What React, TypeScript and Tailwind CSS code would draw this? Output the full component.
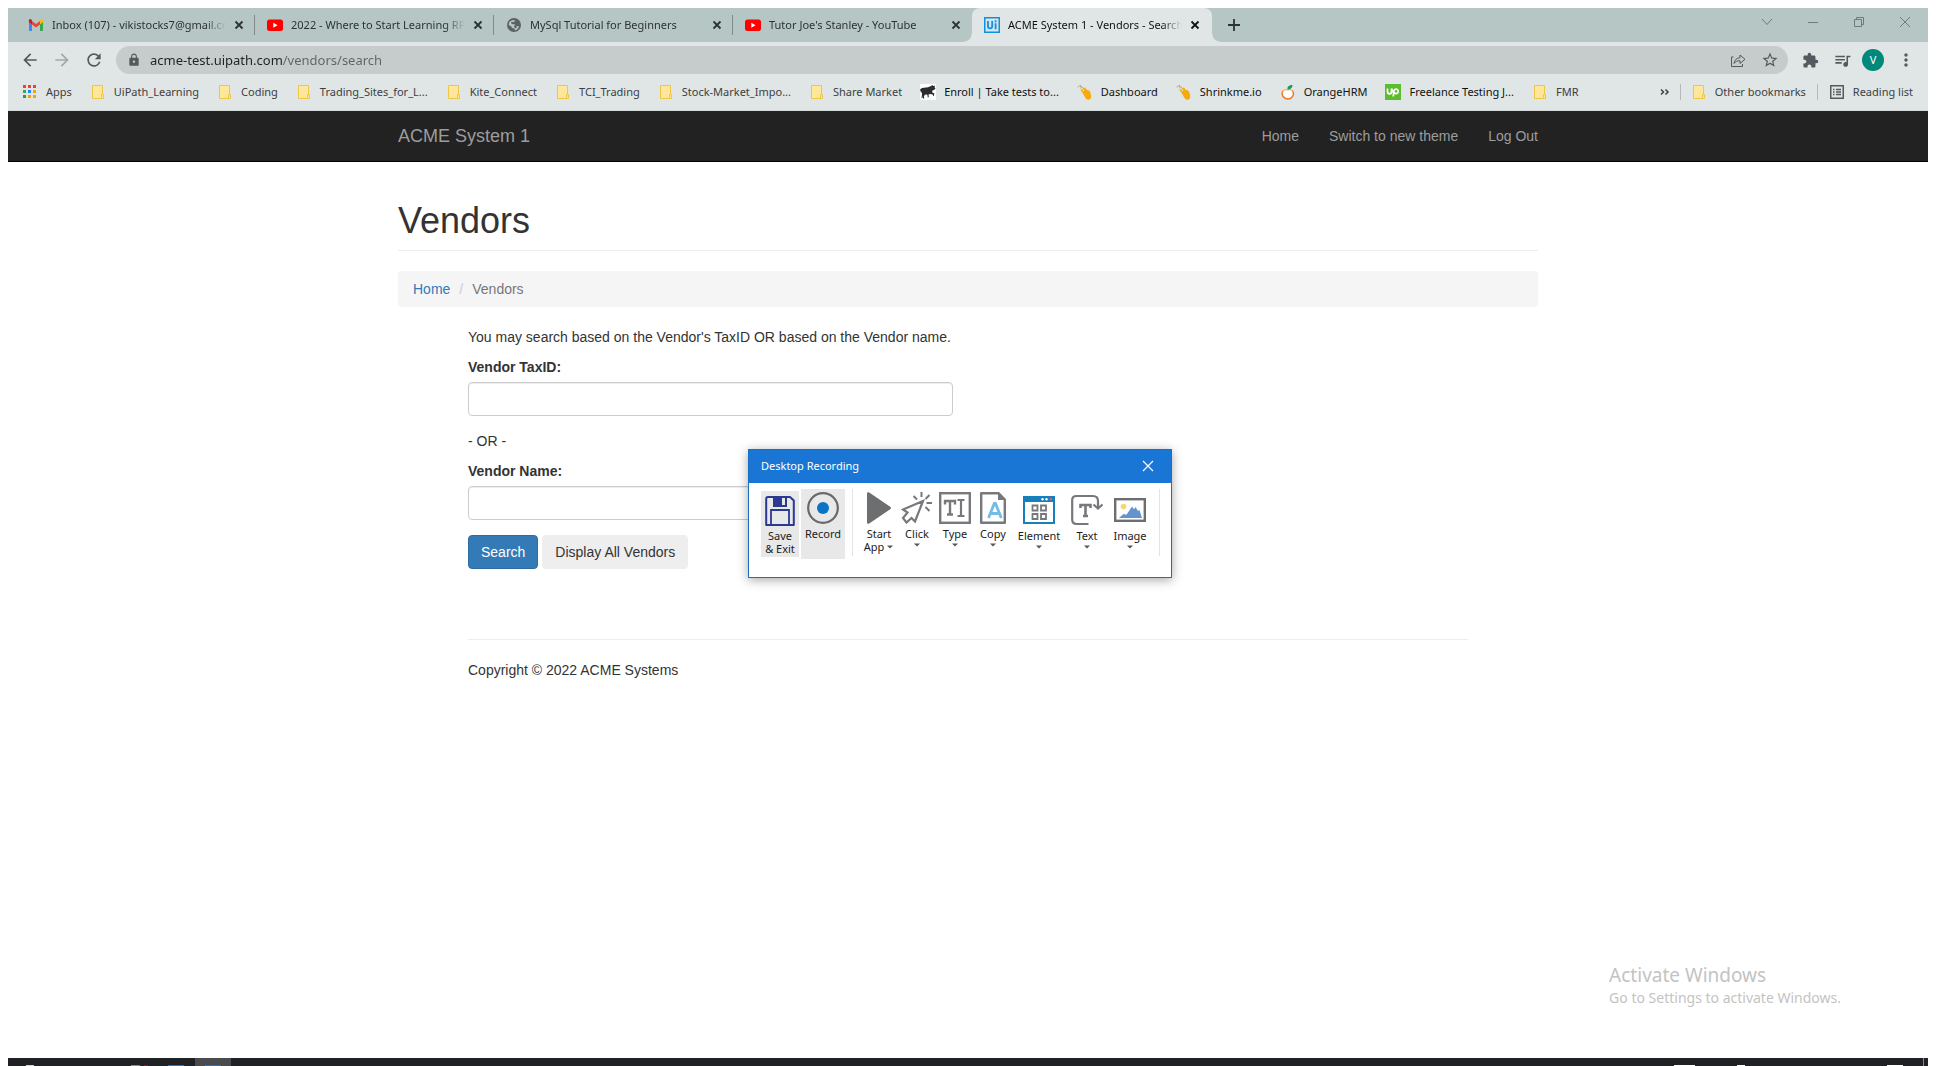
import React from 'react';
import {
  MdArrowBack,
  MdArrowForward,
  MdRefresh,
  MdLock,
  MdStarBorder,
  MdExtension,
  MdQueueMusic,
  MdMoreVert,
} from 'react-icons/md';

/* ---------- favicons and bookmark icons ---------- */

const GmailIcon = () => (
  <svg viewBox="0 0 16 16" className="size-4 shrink-0">
    <path d="M1 5v8.2c0 .4.4.8.8.8H4V7L1 4.6z" fill="#4285f4" />
    <path d="M15 5v8.2c0 .4-.4.8-.8.8H12V7l3-2.4z" fill="#34a853" />
    <path d="M12 4v3.5L15.2 5V3.8c0-1.4-1.5-2.2-2.6-1.4z" fill="#fbbc04" />
    <path d="M4 7.5V4l4 3 4-3v3.5l-4 3z" fill="#ea4335" />
    <path d="M.8 3.8V5L4 7.5V4l-.6-1.6C2.3 1.6.8 2.4.8 3.8z" fill="#c5221f" />
  </svg>
);

const YouTubeIcon = () => (
  <svg viewBox="0 0 16 16" className="size-4 shrink-0">
    <rect x="0" y="2.5" width="16" height="11.5" rx="2.5" fill="#ff0000" />
    <path d="M6.3 5.8v4.9l4.3-2.45z" fill="#fff" />
  </svg>
);

const GlobeIcon = () => (
  <svg viewBox="0 0 16 16" className="size-4 shrink-0">
    <circle cx="8" cy="8" r="7" fill="#5b6165" />
    <path d="M3.2 5.2C5 3 7.500 2.800 9.200 3.600L8 5.200 6 6l2.500 1.200 1 1.800 3.500.200c-.300 1.900-1.800 3.700-4 4.200l-.500-2-2.500-.500-1-2-2.300-.700z" fill="#b6c6c5" />
    <path d="M5.500 4.800l2.500.700.800 1.500-2.300.300-1.500-1z M7.500 8.500l3 .500.300 1.800-1.800.400z" fill="#5b6165" />
  </svg>
);

const UiPathIcon = () => (
  <svg viewBox="0 0 16 16" className="size-4 shrink-0">
    <rect x="0" y="0" width="16" height="16" fill="#1290dc" />
    <rect x="1.5" y="1.5" width="13" height="13" fill="#d4e6f0" />
    <path d="M4 4v5.300a2.100 2.100 0 0 0 4.200 0V4" stroke="#1290dc" strokeWidth="1.800" fill="none" />
    <path d="M11.600 6.300v6M11.600 3.300v1.900" stroke="#1290dc" strokeWidth="1.800" />
  </svg>
);

const appColors = [
  'fill-[#ea4335]', 'fill-[#ea4335]', 'fill-[#ea4335]',
  'fill-[#34a853]', 'fill-[#1a88ff]', 'fill-[#f5a300]',
  'fill-[#2c9a55]', 'fill-[#f5a300]', 'fill-[#f5a300]',
];

const AppsIcon = () => (
  <svg viewBox="0 0 16 16" className="size-4 shrink-0">
    {appColors.map((c, i) => (
      <rect key={i} x={1 + (i % 3) * 5} y={1 + Math.floor(i / 3) * 5} width="3" height="3" className={c} />
    ))}
  </svg>
);

const FolderIcon = () => (
  <svg viewBox="0 0 16 16" className="size-4 shrink-0">
    <path d="M2.5 1.5h10v13h-10z" fill="#ffe69a" stroke="#edc64a" />
    <path d="M11.5 10.5h2v4h-2z" fill="#ffe69a" stroke="#edc64a" />
  </svg>
);

const BullIcon = () => (
  <svg viewBox="0 0 16 16" className="size-4 shrink-0">
    <rect width="16" height="16" fill="#fff" />
    <path
      d="M0 5.500l2-1.500 6-.800 3-1.200 1.500-1 .500 1 2.200-.500-.700 1.500 1 1.500-1.500 1.500-1.300.300-.700 2 2.300 1.200-.300 2.500-.900-.200-.300-1.300-2.800-.500-1.500.500.300 2.500-1 .500-.500-3-2.500.200-.800 1.500.200 2.300H3l-.200-3L2.500 14h-1l.500-3.500-.300-2.500-.700.500z"
      fill="#2b2d2f"
    />
  </svg>
);

const TagIcon = () => (
  <svg viewBox="0 0 16 16" className="size-4 shrink-0">
    <path d="M1 3.500a1.500 1.500 0 1 1 2.500 1M3 1l3 3" stroke="#b9a878" fill="none" />
    <path d="M3.500 6L8 3.300l1.300 2.200 3.500 1.500 1.400 4.500-.200 3-2.500 1.500-2.300-1L7 11.500 5.500 8.800z" fill="#f5ab0c" />
    <circle cx="6.400" cy="6.200" r=".7" fill="#fff" />
  </svg>
);

const OrangeIcon = () => (
  <svg viewBox="0 0 16 16" className="size-4 shrink-0">
    <path d="M3.300 6.500C1.500 9 2 12 4.300 13.700c2 1.500 5.200 1.500 7.200 0 2.300-1.800 2.600-5 .700-7.200" stroke="#ee7623" strokeWidth="1.500" fill="#fff" />
    <path d="M2.500 8C4 5.500 6 5.300 7.800 6c1.800-.700 4-.300 5.200 1.800" stroke="#f09a5c" fill="#fff" />
    <path d="M7.500 5.500C7 2.700 9 1 12.500 1c0 2.500-1.500 4.300-4 4.500z" fill="#1f9a55" />
  </svg>
);

const UpworkIcon = () => (
  <svg viewBox="0 0 16 16" className="size-4 shrink-0">
    <rect width="16" height="16" fill="#5bbc2e" />
    <path
      d="M2.500 4.500v3.300a2 2 0 0 0 4 0V4.500C7.200 7 8.200 8.600 10.200 9.400a2.200 2.200 0 1 0-1.300-2.700L8.200 12.500"
      stroke="#fff"
      strokeWidth="1.700"
      fill="none"
    />
  </svg>
);

const ReadingListIcon = () => (
  <svg viewBox="0 0 16 16" className="size-4 shrink-0" fill="none" stroke="#55595d">
    <rect x="1.750" y="1.750" width="12.500" height="12.500" strokeWidth="1.500" />
    <path d="M4 5.500h1.500M4 8h1.500M4 10.500h1.500M7 5.500h5M7 8h5M7 10.500h5" strokeWidth="1.400" />
  </svg>
);

/* ---------- recorder icons ---------- */

const SaveIcon = () => (
  <svg viewBox="0 0 32 32" className="size-8">
    <path d="M4 3h22l3.800 3.500V31H2.200V5q0-2 1.800-2z" fill="none" stroke="#2b3990" strokeWidth="2" strokeLinejoin="round" />
    <path d="M9 2h14v11H9z" fill="#2b3990" />
    <path d="M18 4h3v7h-3z" fill="#e8e8e8" />
    <path d="M7 31V16h18v15" fill="none" stroke="#2b3990" strokeWidth="1.800" />
  </svg>
);

const RecordIcon = () => (
  <svg viewBox="0 0 32 32" className="size-8">
    <circle cx="16" cy="16" r="14.800" fill="none" stroke="#68696b" strokeWidth="2.200" />
    <circle cx="16" cy="16" r="6" fill="#0a74c4" />
  </svg>
);

const PlayIcon = () => (
  <svg viewBox="0 0 32 32" className="size-8">
    <path d="M4 1.500C4 .2 5.200-.2 6.200.6l21 14.200c1 .7 1 1.700 0 2.400l-21 14.200c-1 .8-2.200.400-2.200-.900z" fill="#6d6e70" />
  </svg>
);

const ClickIcon = () => (
  <svg viewBox="0 0 32 32" className="size-8">
    <path
      d="M22 9L2 17.500l4.500 3L2 26l3.500 4.500 5-4.500 3.500 3.500z"
      fill="none"
      stroke="#77787b"
      strokeWidth="2.200"
      strokeLinejoin="miter"
    />
    <path d="M12.500 4l3.500 3.500M20.500 0v5M28.500 3l-4 4M31 11h-5.500M24.500 15l4 4" stroke="#77787b" strokeWidth="2" fill="none" />
  </svg>
);

const TypeIcon = () => (
  <svg viewBox="0 0 32 32" className="size-8" fill="none" stroke="#77787b">
    <rect x="1.200" y="1.200" width="29.600" height="29.600" strokeWidth="2.400" />
    <path d="M6 12.500V9h10v3.500M11 9v13.500M8 22.500h6" strokeWidth="2.400" />
    <path d="M18.500 8h7M22 8v16M18.500 24h7" strokeWidth="2.200" />
  </svg>
);

const CopyIcon = () => (
  <svg viewBox="0 0 32 32" className="size-8" fill="none">
    <path d="M4.200 1.200H21.500L27.800 7.500V30.800H4.200z" stroke="#77787b" strokeWidth="2.400" strokeLinejoin="round" />
    <path d="M21 1l7 7h-7z" fill="#77787b" />
    <path d="M11.500 26l5.800-14.500h1.200L24.300 26M13.800 21.500h8.400" stroke="#76bbe4" strokeWidth="2.800" />
  </svg>
);

const ElementIcon = () => (
  <svg viewBox="0 0 32 32" className="size-8" fill="none">
    <rect x="1" y="3" width="30" height="26" stroke="#1680bd" strokeWidth="2" />
    <path d="M0 2h32v6H0z" fill="#1680bd" />
    <circle cx="19.500" cy="5.300" r="1.200" fill="#fff" />
    <circle cx="23.500" cy="5.300" r="1.200" fill="#fff" />
    <circle cx="27.800" cy="5.300" r="1.400" fill="#f0506a" />
    <path d="M9.500 11.500h5v5h-5zM18 11.500h5v5h-5zM9.500 20h5v5h-5zM18 20h5v5h-5z" stroke="#77787b" strokeWidth="1.800" />
  </svg>
);

const TextIcon = () => (
  <svg viewBox="0 0 32 32" className="size-8" fill="none" stroke="#77787b" strokeWidth="2.200">
    <path d="M17.500 30H5.500Q1.200 30 1.200 25.500V6Q1.200 2 5.500 2H22Q27 2 27 7V13.500" />
    <path d="M22.500 10.500l4.500 4 4.500-4" />
    <path d="M9.500 14v-3h10v3M14.500 11v11M12 22h5" strokeWidth="2.600" />
  </svg>
);

const ImageIcon = () => (
  <svg viewBox="0 0 32 32" className="size-8">
    <rect x="1.200" y="5.200" width="29.600" height="21.600" fill="#fff" stroke="#6d6e70" strokeWidth="2.400" />
    <circle cx="9.500" cy="12.500" r="2.800" fill="#f0d878" />
    <path d="M5 24l4.500-4 3 .8L18 12.500l2 2.700 1.500-2.200 2.500 4 1.500-1 2.500 8z" fill="#6494cf" />
  </svg>
);

const Caret = () => (
  <svg viewBox="0 0 8 4" className="h-1 w-2">
    <path d="M1 .5h6L4 3.500z" fill="#55565a" />
  </svg>
);

const CloseGlyph = () => (
  <svg viewBox="0 0 10 10" className="size-2.5" stroke="currentColor" strokeWidth="1.800">
    <path d="M1.500 1.500l7 7M8.500 1.500l-7 7" />
  </svg>
);

/* ---------- browser chrome ---------- */

const tabs = [
  { title: 'Inbox (107) - vikistocks7@gmail.com', icon: <GmailIcon /> },
  { title: '2022 - Where to Start Learning RPA', icon: <YouTubeIcon /> },
  { title: 'MySql Tutorial for Beginners', icon: <GlobeIcon /> },
  { title: "Tutor Joe's Stanley - YouTube", icon: <YouTubeIcon /> },
  { title: 'ACME System 1 - Vendors - Search', icon: <UiPathIcon />, active: true },
];

function TabStrip() {
  return (
    <div className="flex h-[34px] bg-[#b6c6c5] pl-2 text-[11px] text-[#2c3334]">
      <div className="flex">
        {tabs.map((t, i) => (
          <div
            key={t.title}
            className={
              t.active
                ? 'relative flex w-60 items-center rounded-t-lg bg-[#e0e6e5] pr-1 pl-3 text-[#111] before:absolute before:bottom-0 before:-left-2 before:size-2 before:bg-[radial-gradient(circle_at_0_0,transparent_7px,#e0e6e5_8px)] after:absolute after:-right-2 after:bottom-0 after:size-2 after:bg-[radial-gradient(circle_at_100%_0,transparent_7px,#e0e6e5_8px)]'
                : 'flex w-[239px] items-center pl-3'
            }
          >
            <button type="button" className="flex min-w-0 flex-1 items-center gap-2 text-left">
              {t.icon}
              <span className="flex-1 overflow-hidden leading-4 whitespace-nowrap [mask-image:linear-gradient(to_right,black_calc(100%-20px),transparent)]">
                {t.title}
              </span>
            </button>
            <button type="button" aria-label="Close tab" className="flex size-[26px] shrink-0 items-center justify-center">
              <CloseGlyph />
            </button>
            {!t.active && <span className={i < 3 ? 'ml-0.5 h-5 w-px bg-[#7f8a89]' : 'ml-0.5 w-px'} />}
          </div>
        ))}
      </div>
      <button type="button" aria-label="New tab" className="flex w-11 items-center justify-center text-[#2c3334]">
        <svg viewBox="0 0 12 12" className="size-3" stroke="currentColor" strokeWidth="1.800">
          <path d="M6 0v12M0 6h12" />
        </svg>
      </button>
      <div className="ml-auto flex h-7 text-[#6f7a7a]">
        <button type="button" aria-label="Search tabs" className="flex w-[46px] items-center justify-center">
          <svg viewBox="0 0 12 12" className="size-3" fill="none" stroke="currentColor">
            <path d="M1 3l5 5.500L11 3" />
          </svg>
        </button>
        <button type="button" aria-label="Minimize" className="flex w-[46px] items-center justify-center">
          <svg viewBox="0 0 10 10" className="size-2.5" stroke="currentColor">
            <path d="M0 5.500h10" />
          </svg>
        </button>
        <button type="button" aria-label="Restore" className="flex w-[46px] items-center justify-center">
          <svg viewBox="0 0 10 10" className="size-2.5" fill="none" stroke="currentColor">
            <path d="M.5 2.500h7v7h-7zM2.500 2.500v-2h7v7h-2" />
          </svg>
        </button>
        <button type="button" aria-label="Close window" className="flex w-[46px] items-center justify-center">
          <svg viewBox="0 0 10 10" className="size-2.5" stroke="currentColor">
            <path d="M0 0l10 10M10 0L0 10" />
          </svg>
        </button>
      </div>
    </div>
  );
}

function AddressBar() {
  return (
    <div className="flex h-9 items-center pr-1 pl-3 text-[#55595d]">
      <button type="button" aria-label="Back" className="flex w-8 justify-start">
        <MdArrowBack className="size-5" />
      </button>
      <button type="button" aria-label="Forward" className="flex w-8 justify-start text-[#a3a9ab]">
        <MdArrowForward className="size-5" />
      </button>
      <button type="button" aria-label="Reload" className="flex w-8 justify-start">
        <MdRefresh className="size-5" />
      </button>
      <div className="flex h-7 flex-1 items-center rounded-full bg-[#c6cbcb] pr-0.5 pl-[11px]">
        <MdLock className="size-3.5 shrink-0" />
        <input
          aria-label="Address"
          defaultValue="acme-test.uipath.com/vendors/search"
          className="ml-[9px] h-5 flex-1 bg-[linear-gradient(to_right,#202124_133px,#5f6368_133px)] bg-clip-text text-[13px] text-[#202124] outline-none [-webkit-text-fill-color:transparent]"
        />
        <button type="button" aria-label="Share" className="flex w-8 justify-center">
          <svg viewBox="0 0 16 16" className="size-4" fill="none" stroke="currentColor">
            <path d="M3.500 5H1.500v9.500h11V12" />
            <path d="M4 11.500C4.500 8 6.500 6 10 5.700V3l5 4.300-5 4.200V8.700C7.500 8.700 5.500 9.500 4 11.500z" strokeLinejoin="round" />
          </svg>
        </button>
        <button type="button" aria-label="Bookmark this page" className="flex w-8 justify-center">
          <MdStarBorder className="size-[18px]" />
        </button>
      </div>
      <div className="flex items-center pl-1.5">
        <button type="button" aria-label="Extensions" className="flex w-8 justify-center">
          <MdExtension className="size-[17px]" />
        </button>
        <button type="button" aria-label="Media controls" className="flex w-8 justify-center">
          <MdQueueMusic className="size-[19px]" />
        </button>
        <button type="button" aria-label="Profile" className="mx-1 flex size-[22px] items-center justify-center rounded-full bg-[#00897b] text-[11px] text-white">
          V
        </button>
        <button type="button" aria-label="Menu" className="flex w-9 justify-center">
          <MdMoreVert className="size-5" />
        </button>
      </div>
    </div>
  );
}

const bookmarks = [
  { label: 'UiPath_Learning', icon: <FolderIcon /> },
  { label: 'Coding', icon: <FolderIcon /> },
  { label: 'Trading_Sites_for_L...', icon: <FolderIcon /> },
  { label: 'Kite_Connect', icon: <FolderIcon /> },
  { label: 'TCI_Trading', icon: <FolderIcon /> },
  { label: 'Stock-Market_Impo...', icon: <FolderIcon /> },
  { label: 'Share Market', icon: <FolderIcon /> },
  { label: 'Enroll | Take tests to...', icon: <BullIcon />, site: true },
  { label: 'Dashboard', icon: <TagIcon />, site: true },
  { label: 'Shrinkme.io', icon: <TagIcon />, site: true },
  { label: 'OrangeHRM', icon: <OrangeIcon />, site: true },
  { label: 'Freelance Testing J...', icon: <UpworkIcon />, site: true },
  { label: 'FMR', icon: <FolderIcon /> },
];

function BookmarksBar() {
  return (
    <div className="flex h-[33px] items-center border-b border-[#d3d9d8] pr-[15px] pb-1 pl-3.5 text-[11px] leading-4 whitespace-nowrap text-[#3c4043]">
      <div className="flex gap-[18px]">
        <button type="button" className="flex items-center gap-2">
          <AppsIcon />
          Apps
        </button>
        {bookmarks.map((b) =>
          b.site ? (
            <a key={b.label} href="#" className="flex items-center gap-2 text-[#111]">
              {b.icon}
              {b.label}
            </a>
          ) : (
            <button key={b.label} type="button" className="flex items-center gap-2">
              {b.icon}
              {b.label}
            </button>
          ),
        )}
      </div>
      <div className="ml-auto flex items-center">
        <button type="button" aria-label="More bookmarks" className="mr-2.5">
          <svg viewBox="0 0 10 10" className="size-2.5" fill="none" stroke="#3c4043" strokeWidth="1.500">
            <path d="M1 2.500L3.500 5 1 7.500M5.500 2.500L8 5 5.500 7.500" />
          </svg>
        </button>
        <span className="h-4 w-px bg-[#b4baba]" />
        <button type="button" className="ml-2.5 flex items-center gap-2">
          <FolderIcon />
          Other bookmarks
        </button>
        <span className="ml-[11px] h-4 w-px bg-[#b4baba]" />
        <button type="button" className="ml-[11px] flex items-center gap-2">
          <ReadingListIcon />
          Reading list
        </button>
      </div>
    </div>
  );
}

/* ---------- page ---------- */

function SiteNav() {
  return (
    <nav className="border-b border-black bg-[#222] text-sm leading-5 text-[#9d9d9d]">
      <div className="mx-auto flex h-[50px] max-w-[1170px] items-center justify-between px-[15px]">
        <a href="#" className="text-lg leading-5">ACME System 1</a>
        <div className="flex gap-[30px]">
          <a href="#">Home</a>
          <a href="#">Switch to new theme</a>
          <a href="#">Log Out</a>
        </div>
      </div>
    </nav>
  );
}

function VendorSearch() {
  const field =
    'block h-[34px] w-full max-w-[485px] rounded border border-[#ccc] bg-white px-3 shadow-[inset_0_1px_1px_rgba(0,0,0,0.075)] outline-none';
  return (
    <main className="mx-auto w-full max-w-[1170px] px-[15px] text-sm leading-5 text-[#333]">
      <h1 className="mt-[39px] border-b border-[#eee] pb-2.5 text-4xl leading-[39px]">Vendors</h1>
      <nav aria-label="Breadcrumb" className="mt-5 flex gap-[9px] rounded bg-[#f5f5f5] px-[15px] py-2">
        <a href="#" className="text-[#337ab7]">Home</a>
        <span className="text-[#ccc]">/</span>
        <span className="text-[#777]">Vendors</span>
      </nav>
      <div className="mt-5 px-[70px]">
        <form onSubmit={(e) => e.preventDefault()}>
          <p>You may search based on the Vendor's TaxID OR based on the Vendor name.</p>
          <label htmlFor="tax-id" className="mt-2.5 mb-[5px] block font-bold">Vendor TaxID:</label>
          <input id="tax-id" type="text" className={field} />
          <p className="mt-[15px]">- OR -</p>
          <label htmlFor="vendor-name" className="mt-2.5 mb-[5px] block font-bold">Vendor Name:</label>
          <input id="vendor-name" type="text" className={field} />
          <div className="mt-[15px] flex gap-1">
            <button type="submit" className="rounded border border-[#2e6da4] bg-[#337ab7] px-3 py-1.5 text-white">
              Search
            </button>
            <button type="button" className="rounded border border-[#eee] bg-[#eee] px-3 py-1.5">
              Display All Vendors
            </button>
          </div>
        </form>
        <footer className="mt-[70px] border-t border-[#eee] pt-5">
          <p>Copyright © 2022 ACME Systems</p>
        </footer>
      </div>
    </main>
  );
}

/* ---------- recorder window ---------- */

const tools = [
  { label: 'Click', icon: <ClickIcon />, box: 'w-[38px] pt-[9px]' },
  { label: 'Type', icon: <TypeIcon />, box: 'w-[38px] pt-[9px]' },
  { label: 'Copy', icon: <CopyIcon />, box: 'w-[38px] pt-[9px]' },
  { label: 'Element', icon: <ElementIcon />, box: 'w-[54px] pt-[11px]' },
  { label: 'Text', icon: <TextIcon />, box: 'w-[42px] pt-[11px]' },
  { label: 'Image', icon: <ImageIcon />, box: 'w-[44px] pt-[11px]' },
];

function RecorderWindow() {
  return (
    <section
      aria-label="Desktop Recording"
      className="absolute top-[449px] left-[748px] w-[424px] border border-[#1a6fc4] bg-white text-[11px] leading-[13px] text-[#1c1c1c] shadow-[0_2px_10px_rgba(0,0,0,0.35)]"
    >
      <header className="flex h-[33px] items-center justify-between bg-[#1976d4] pr-[17px] pb-0.5 pl-3 text-white">
        <span>Desktop Recording</span>
        <button type="button" aria-label="Close recorder">
          <svg viewBox="0 0 12 12" className="size-3" stroke="currentColor" strokeWidth="1.200">
            <path d="M1 1l10 10M11 1L1 11" />
          </svg>
        </button>
      </header>
      <div className="flex h-[94px] items-start">
        <button type="button" className="mt-2 ml-3 flex h-[66px] w-[38px] flex-col items-center gap-[3px] bg-[#e8e8e8] pt-[3px]">
          <SaveIcon />
          <span className="whitespace-nowrap">Save<br />&amp; Exit</span>
        </button>
        <button type="button" className="mt-1.5 ml-0.5 flex h-[70px] w-11 flex-col items-center gap-[3px] bg-[#e8e8e8] pt-[3px]">
          <RecordIcon />
          <span>Record</span>
        </button>
        <span className="mt-1.5 ml-[7px] h-[67px] w-px bg-[#e4e4e4]" />
        <button type="button" className="ml-[7px] flex w-[38px] flex-col items-center gap-[3px] pt-[9px]">
          <PlayIcon />
          <span className="whitespace-nowrap">
            Start
            <span className="flex items-center gap-0.5">
              App
              <Caret />
            </span>
          </span>
        </button>
        {tools.map((t) => (
          <button key={t.label} type="button" className={'flex flex-col items-center gap-[3px] ' + t.box}>
            {t.icon}
            <span>{t.label}</span>
            <Caret />
          </button>
        ))}
        <span className="mt-1.5 ml-[7px] h-[67px] w-px bg-[#e4e4e4]" />
      </div>
    </section>
  );
}

/* ---------- taskbar ---------- */

function Taskbar() {
  return (
    <div className="mx-2 flex h-2 items-end bg-[#1f2125]">
      <span className="ml-[18px] h-px w-2 bg-[#d8d8d8]" />
      <span className="ml-[97px] h-px w-[9px] bg-[#8d8d8d]" />
      <span className="ml-1 h-px w-1 bg-[#8b1a24]" />
      <span className="ml-5 h-px w-4 bg-[#1a76d2]" />
      <span className="ml-[11px] flex h-2 w-9 items-end justify-center bg-[#4a4b4f]">
        <span className="h-px w-4 bg-[#1a76d2]" />
      </span>
      <span className="ml-auto h-px w-[21px] bg-white" />
      <span className="ml-[42px] h-px w-2 bg-white" />
      <span className="ml-[142px] h-px w-4 bg-white" />
      <span className="mr-1 ml-5 h-2 w-px bg-[#8a8a8a]" />
    </div>
  );
}

export default function App() {
  return (
    <div className="relative flex min-h-screen flex-col bg-white font-['Noto_Sans',sans-serif]">
      <div className="mx-2 mt-2">
        <div className="bg-[#e0e6e5]">
          <TabStrip />
          <AddressBar />
          <BookmarksBar />
        </div>
        <div className="font-['Liberation_Sans',Arial,sans-serif]">
          <SiteNav />
          <VendorSearch />
        </div>
      </div>
      <RecorderWindow />
      <aside className="absolute right-[95px] bottom-[57px] text-[#c3c3c3]">
        <p className="text-[19px] leading-6">Activate Windows</p>
        <p className="text-sm leading-[22px]">Go to Settings to activate Windows.</p>
      </aside>
      <div className="mt-auto">
        <Taskbar />
      </div>
    </div>
  );
}
